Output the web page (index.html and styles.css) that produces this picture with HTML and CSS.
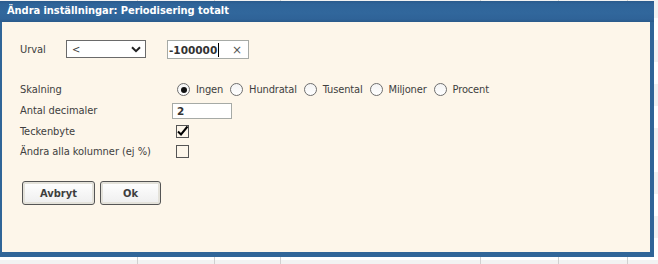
FILE: index.html
```html
<!DOCTYPE html>
<html lang="sv">
<head>
    <meta charset="UTF-8">
    <title>Ändra inställningar</title>
    <link rel="stylesheet" href="styles.css">
</head>
<body>

    <!-- Sheet behind the dialog -->
    <div class="sheet">
        <div class="sheet-row alt"><span></span><span></span><span></span><span></span><span></span><span></span><span></span></div>
        <div class="sheet-row"><span></span><span></span><span></span><span></span><span></span><span></span><span></span></div>
        <div class="sheet-row alt"><span></span><span></span><span></span><span></span><span></span><span></span><span></span></div>
        <div class="sheet-row"><span></span><span></span><span></span><span></span><span></span><span></span><span></span></div>
        <div class="sheet-row alt"><span></span><span></span><span></span><span></span><span></span><span></span><span></span></div>
        <div class="sheet-row"><span></span><span></span><span></span><span></span><span></span><span></span><span></span></div>
        <div class="sheet-row alt"><span></span><span></span><span></span><span></span><span></span><span></span><span></span></div>
        <div class="sheet-row"><span></span><span></span><span></span><span></span><span></span><span></span><span></span></div>
        <div class="sheet-row alt"><span></span><span></span><span></span><span></span><span></span><span></span><span></span></div>
        <div class="sheet-row"><span></span><span></span><span></span><span></span><span></span><span></span><span></span></div>
        <div class="sheet-row alt"><span></span><span></span><span></span><span></span><span></span><span></span><span></span></div>
        <div class="sheet-row"><span></span><span></span><span></span><span></span><span></span><span></span><span></span></div>
        <div class="sheet-row alt"><span></span><span></span><span></span><span></span><span></span><span></span><span></span></div>
    </div>

    <!-- Dialog -->
    <div class="dialog">
        <div class="dialog-title">Ändra inställningar: Periodisering totalt</div>

        <div class="dialog-body">
            <div class="urval-row">
                <span class="label urval-label">Urval</span>
                <div class="select">
                    <span>&lt;</span>
                    <svg class="chevron" width="10" height="7" viewBox="0 0 10 7">
                        <path d="M1 1.2 L5 5.2 L9 1.2" fill="none" stroke="#222" stroke-width="2"/>
                    </svg>
                </div>
                <div class="text-input value-input">
                    <span class="value">-100000</span><span class="caret"></span>
                    <span class="clear">×</span>
                </div>
            </div>

            <div class="form">
                <span class="label">Skalning</span>
                <div class="radios">
                    <span class="radio checked"></span><span class="radio-label">Ingen</span>
                    <span class="radio"></span><span class="radio-label">Hundratal</span>
                    <span class="radio"></span><span class="radio-label">Tusental</span>
                    <span class="radio"></span><span class="radio-label">Miljoner</span>
                    <span class="radio"></span><span class="radio-label">Procent</span>
                </div>

                <span class="label">Antal decimaler</span>
                <div><div class="text-input decimals">2</div></div>

                <span class="label">Teckenbyte</span>
                <div>
                    <span class="checkbox">
                        <svg width="13" height="13" viewBox="0 0 13 13">
                            <path d="M2 6.5 L5 9.5 L11.5 1.5" fill="none" stroke="#000" stroke-width="2"/>
                        </svg>
                    </span>
                </div>

                <span class="label">Ändra alla kolumner (ej %)</span>
                <div><span class="checkbox"></span></div>
            </div>

            <div class="buttons">
                <button class="btn btn-cancel">Avbryt</button>
                <button class="btn btn-ok">Ok</button>
            </div>
        </div>
    </div>

</body>
</html>
```

FILE: styles.css
```css
/* General */
body {
    margin: 0;
    padding: 0;
    width: 658px;
    height: 264px;
    overflow: hidden;
    background: #ffffff;
    font-family: "DejaVu Sans Condensed", "DejaVu Sans", sans-serif;
    font-size: 11px;
    color: #404040;
    position: relative;
}

/* Sheet in the background */
.sheet {
    display: flex;
    flex-direction: column;
    height: 264px;
    overflow: hidden;
}

.sheet-row {
    display: flex;
    flex: none;
    height: 22px;
    background: #ffffff;
}

.sheet-row:first-child {
    height: 18px;
}

.sheet-row.alt {
    background: #f2f2f2;
}

.sheet-row span {
    border-right: 1px solid #d0d0d0;
    flex: none;
}

.sheet-row span:nth-child(1) { width: 137px; }
.sheet-row span:nth-child(2) { width: 76px; }
.sheet-row span:nth-child(3) { width: 65px; }
.sheet-row span:nth-child(4) { width: 199px; }
.sheet-row span:nth-child(5) { width: 77px; }
.sheet-row span:nth-child(6) { width: 68px; }
.sheet-row span:nth-child(7) { flex: 1; border-right: none; }

/* Dialog window */
.dialog {
    position: absolute;
    left: 0;
    top: 1px;
    width: 654px;
    height: 256px;
    box-sizing: border-box;
    background: #fdf6ea;
    border-left: 2px solid #306598;
    border-right: 4px solid #306598;
    border-bottom: 5px solid #306598;
    display: flex;
    flex-direction: column;
}

.dialog-title {
    height: 21px;
    line-height: 20px;
    margin-right: -4px;
    margin-left: -2px;
    padding-left: 7px;
    background: linear-gradient(#2a5a8c 0px, #2f6499 3px, #31679c 12px, #2f6398 18px, #2a5a8a 21px);
    color: #ffffff;
    font-weight: bold;
    font-size: 11px;
    letter-spacing: -0.05px;
}

.dialog-body {
    padding: 18px 0 0 18px;
}

.label {
    letter-spacing: -0.05px;
}

/* Urval row */
.urval-row {
    display: flex;
    align-items: center;
    height: 19px;
}

.urval-label {
    width: 46px;
}

.select {
    width: 80px;
    height: 18px;
    box-sizing: border-box;
    border: 1px solid #6a6a6a;
    background: #ffffff;
    display: flex;
    align-items: center;
    justify-content: space-between;
    padding: 0 4px 0 5px;
    align-self: flex-start;
}

.chevron {
    margin-top: 1px;
}

.text-input {
    box-sizing: border-box;
    border: 1px solid #a6aaa6;
    background: #ffffff;
    display: flex;
    align-items: center;
    font-family: "DejaVu Sans", sans-serif;
    font-weight: bold;
    font-size: 10.5px;
    color: #333333;
}

.value-input {
    margin-left: 21px;
    width: 82px;
    height: 19px;
    padding-left: 1px;
}

.caret {
    width: 1px;
    height: 14px;
    background: #000000;
    margin-left: 1px;
}

.clear {
    margin-left: auto;
    margin-right: 6px;
    font-weight: normal;
    font-size: 12px;
    color: #555555;
}

/* Settings grid */
.form {
    display: grid;
    grid-template-columns: 152px auto;
    grid-template-rows: 21px 21px 20px 21px;
    align-items: center;
    margin-top: 20px;
}

.radios {
    display: flex;
    align-items: center;
    padding-left: 5px;
}

.radio {
    width: 13px;
    height: 13px;
    box-sizing: border-box;
    border: 1px solid #6e6e6e;
    border-radius: 50%;
    background: linear-gradient(#f4f4f4, #ffffff);
    display: flex;
    align-items: center;
    justify-content: center;
}

.radio.checked::after {
    content: "";
    width: 6px;
    height: 6px;
    border-radius: 50%;
    background: #111111;
}

.radio-label {
    margin: 0 7px 0 6px;
    letter-spacing: -0.15px;
}

.decimals {
    width: 60px;
    height: 16px;
    padding-left: 4px;
}

.checkbox {
    display: block;
    width: 13px;
    height: 13px;
    box-sizing: border-box;
    border: 1px solid #555555;
    margin-left: 4px;
    position: relative;
}

.checkbox svg {
    position: absolute;
    left: -1px;
    top: -1px;
}

/* Buttons */
.buttons {
    display: flex;
    gap: 5px;
    margin-top: 19px;
    padding-left: 2px;
}

.btn {
    height: 24px;
    box-sizing: border-box;
    border: 1px solid #555555;
    border-radius: 3px;
    background: linear-gradient(#ffffff, #eeeeee);
    box-shadow: inset 0 0 0 2px #e4e2da;
    font-family: "DejaVu Sans Condensed", "DejaVu Sans", sans-serif;
    font-weight: bold;
    font-size: 11px;
    color: #3e3e3e;
    padding: 0;
}

.btn-cancel {
    width: 73px;
}

.btn-ok {
    width: 61px;
}
```
